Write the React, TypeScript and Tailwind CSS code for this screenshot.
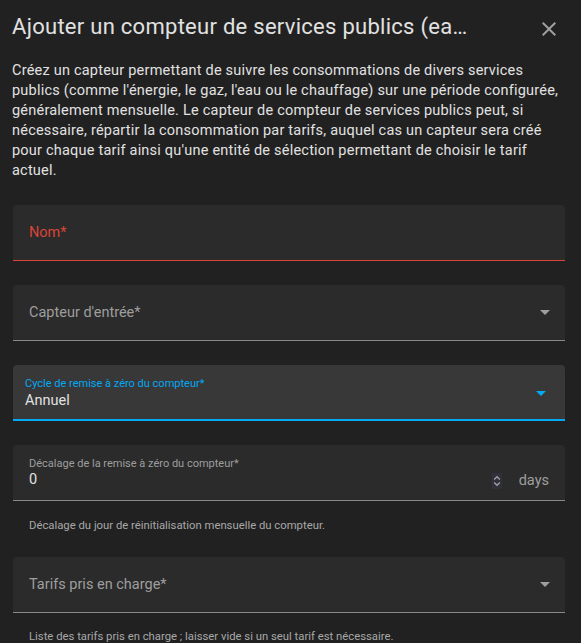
import type { ReactNode } from "react";

const font = { fontFamily: "Roboto, 'Noto Sans', sans-serif" };

function Caret({ blue = false }: { blue?: boolean }) {
  return (
    <svg width="10" height="5" viewBox="0 0 10 5" className="shrink-0">
      <path d="M0 0 L10 0 L5 5 Z" fill={blue ? "#03a9f4" : "#9e9e9e"} />
    </svg>
  );
}

function Field({
  children,
  line = "border-[#8a8a8a]",
  bg = "bg-[#2b2b2b]",
}: {
  children: ReactNode;
  line?: string;
  bg?: string;
}) {
  return (
    <div className={`h-14 rounded-t ${bg} border-b ${line} flex items-center`}>
      {children}
    </div>
  );
}

export default function App() {
  return (
    <div
      className="w-[581px] h-[643px] overflow-hidden bg-[#212121] pt-[13px] pl-3 pr-4 text-[#e1e1e1]"
      style={font}
    >
      <div className="flex items-center h-7">
        <h2 className="flex-1 min-w-0 truncate text-[22px] leading-7 tracking-[0.0125em] font-normal pr-[62px]">
          Ajouter un compteur de services publics (eau, gaz, électricité)
        </h2>
        <button className="w-6 h-6 mt-1 mr-1 flex items-center justify-center text-[#9e9e9e]">
          <svg viewBox="0 0 24 24" className="w-6 h-6" fill="currentColor">
            <path d="M19,6.41L17.59,5L12,10.59L6.41,5L5,6.41L10.59,12L5,17.59L6.41,19L12,13.41L17.59,19L19,17.59L13.41,12L19,6.41Z" />
          </svg>
        </button>
      </div>

      <p className="mt-5 text-[14.5px] leading-5 tracking-[0.015em]">
        Créez un capteur permettant de suivre les consommations de divers services publics (comme
        l'énergie, le gaz, l'eau ou le chauffage) sur une période configurée, généralement mensuelle.
        Le capteur de compteur de services publics peut, si nécessaire, répartir la consommation par
        tarifs, auquel cas un capteur sera créé pour chaque tarif ainsi qu'une entité de sélection
        permettant de choisir le tarif actuel.
      </p>

      <div className="ml-px flex flex-col">
        <div className="mt-6">
          <Field line="border-[#db4437]">
            <span className="pl-4 text-[14.5px] text-[#db4437]">Nom*</span>
          </Field>
        </div>

        <div className="mt-6">
          <Field>
            <span className="pl-4 flex-1 text-[14.5px] text-[#9e9e9e]">Capteur d'entrée*</span>
            <span className="mr-[15px] flex">
              <Caret />
            </span>
          </Field>
        </div>

        <div className="mt-6">
          <div className="h-14 rounded-t bg-[#383838] border-b-2 border-[#03a9f4] flex items-start">
            <div className="flex-1 pl-3 pt-[11px] flex flex-col">
              <span className="text-[11px] leading-4 text-[#03a9f4]">
                Cycle de remise à zéro du compteur*
              </span>
              <span className="text-[14.5px] leading-[18px] text-[#e1e1e1]">Annuel</span>
            </div>
            <span className="mr-[19px] mt-[26px] flex">
              <Caret blue />
            </span>
          </div>
        </div>

        <div className="mt-6">
          <div className="h-14 rounded-t bg-[#2b2b2b] border-b border-[#8a8a8a] flex items-start">
            <div className="flex-1 pl-4 pt-[11px] flex flex-col">
              <span className="text-[11px] leading-4 text-[#9e9e9e]">
                Décalage de la remise à zéro du compteur*
              </span>
              <span className="text-[14.5px] leading-4 text-[#e1e1e1]">0</span>
            </div>
            <div className="mt-[28px] flex items-center">
              <div className="w-[10px] h-[16px] bg-[#31313b] flex items-center justify-center">
                <svg width="8" height="12" viewBox="0 0 8 12" fill="none" stroke="#a0a0aa" strokeWidth="1.3">
                  <path d="M1.2 4.5 L4 1.7 L6.8 4.5" />
                  <path d="M1.2 7.5 L4 10.3 L6.8 7.5" />
                </svg>
              </div>
              <span className="ml-[17px] mr-4 text-[14.5px] leading-4 text-[#9e9e9e]">days</span>
            </div>
          </div>
        </div>

        <p className="mt-[17px] pl-4 text-[11.3px] leading-4 text-[#a8a8a8]">
          Décalage du jour de réinitialisation mensuelle du compteur.
        </p>

        <div className="mt-[23px]">
          <Field>
            <span className="pl-4 flex-1 text-[14.5px] text-[#9e9e9e]">Tarifs pris en charge*</span>
            <span className="mr-[15px] flex">
              <Caret />
            </span>
          </Field>
        </div>

        <p className="mt-4 pl-4 text-[11.3px] leading-4 text-[#a8a8a8]">
          Liste des tarifs pris en charge ; laisser vide si un seul tarif est nécessaire.
        </p>
      </div>
    </div>
  );
}
